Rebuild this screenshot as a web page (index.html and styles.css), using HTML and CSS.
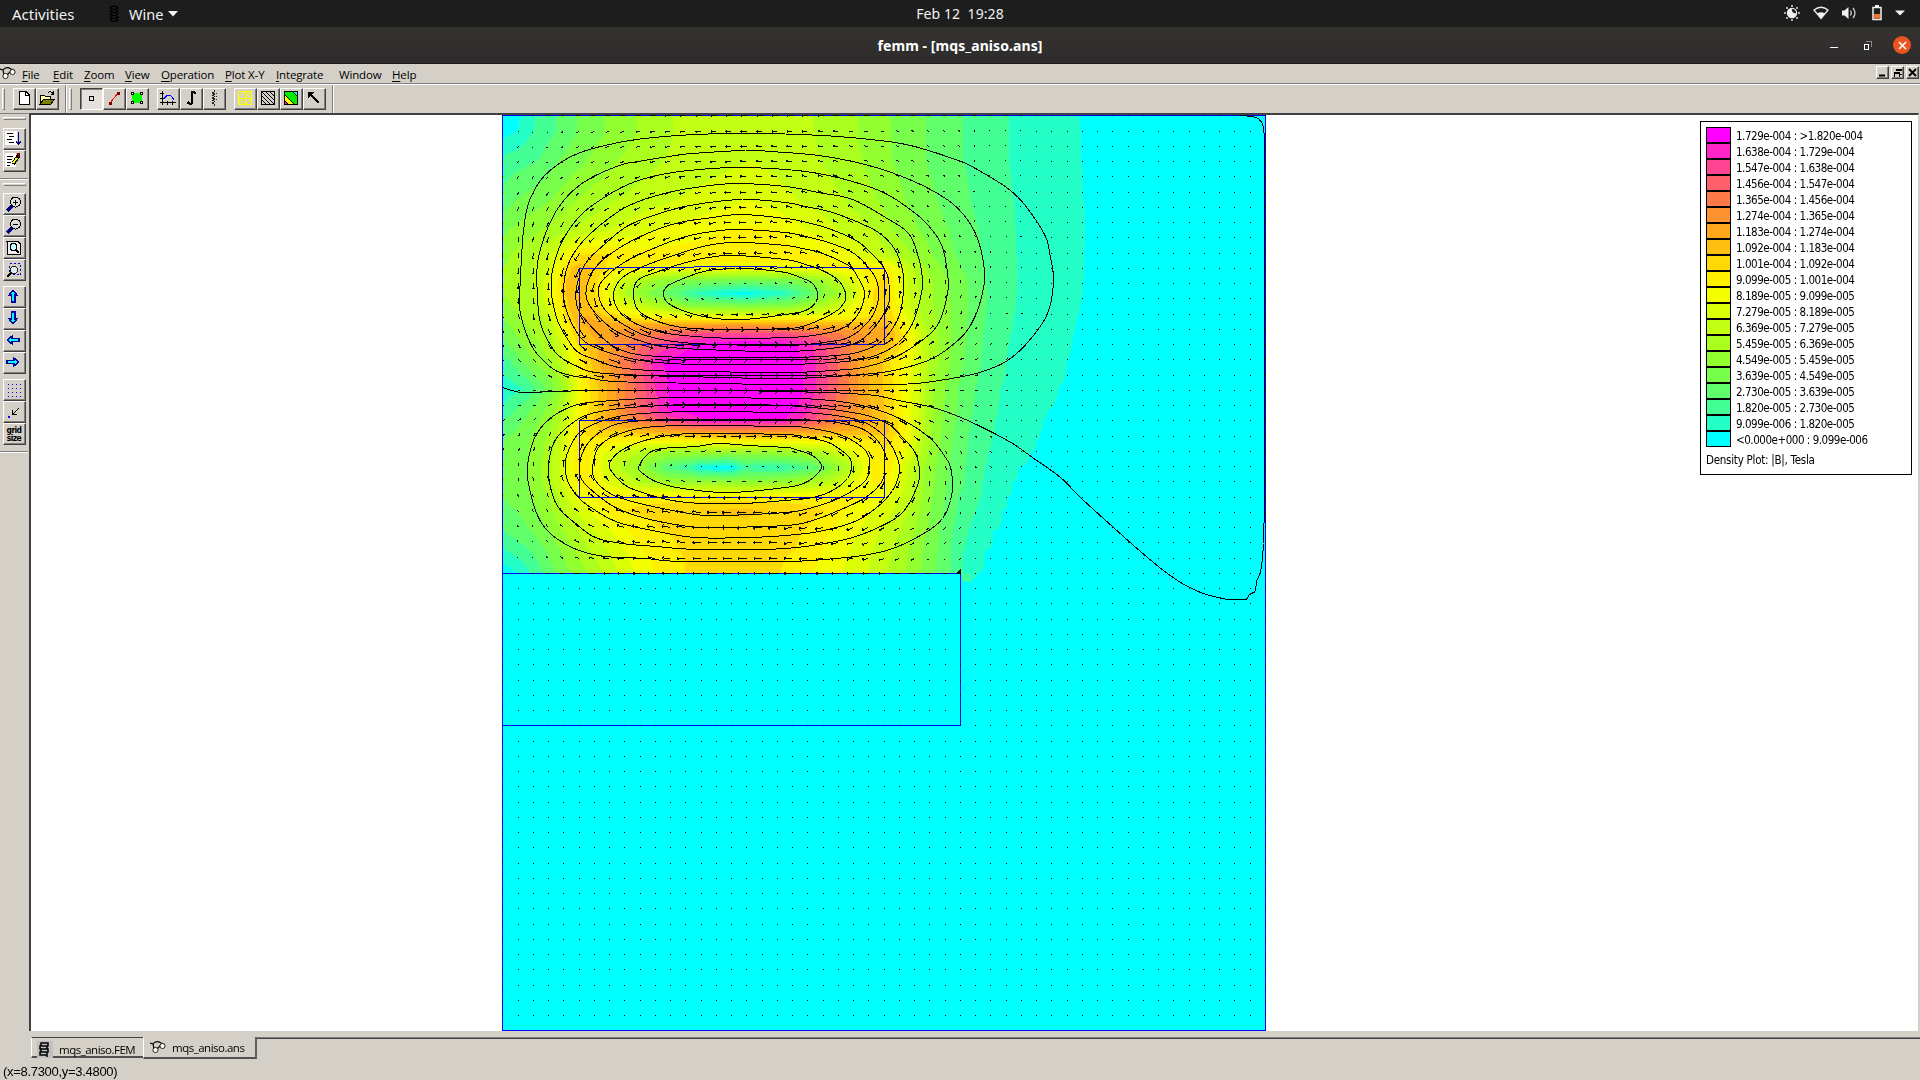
FILE: index.html
```html
<!DOCTYPE html>
<html lang="en">
<head>
<meta charset="utf-8">
<title>femm - [mqs_aniso.ans]</title>
<link rel="stylesheet" href="styles.css">
</head>
<body>
<header class="topbar">
  <div class="top-left">
    <span class="activities">Activities</span>
    <svg class="coil" width="10" height="18" viewBox="0 0 10 18"><g fill="none" stroke="#000" stroke-width="1.2"><path d="M1 3Q5-1 9 3Q5 6 1 3M1 6Q5 3 9 6Q5 9 1 6M1 9Q5 6 9 9Q5 12 1 9M1 12Q5 9 9 12Q5 15 1 12M1 15Q5 12 9 15Q5 18 1 15"/></g></svg>
    <span class="wine">Wine</span>
    <svg class="caret" width="10" height="6"><path d="M0 0H10L5 5.5Z" fill="#f2f2f2"/></svg>
  </div>
  <div class="clock">Feb 12&nbsp; 19:28</div>
  <div class="tray">
    <svg width="16" height="16" viewBox="0 0 16 16"><g fill="#aaa"><rect x="7" y="0" width="2" height="2"/><rect x="7" y="14" width="2" height="2"/><rect x="0" y="7" width="2" height="2"/><rect x="14" y="7" width="2" height="2"/><rect x="2" y="2" width="2" height="2"/><rect x="12" y="2" width="2" height="2"/><rect x="2" y="12" width="2" height="2"/><rect x="12" y="12" width="2" height="2"/></g><circle cx="8" cy="8" r="4.6" fill="none" stroke="#eee" stroke-width="1.2"/><path d="M8 3.5A4.6 4.6 0 1 0 12.5 8A3.5 3.5 0 0 1 8 3.5Z" fill="#f2f2f2"/></svg>
    <svg width="16" height="14" viewBox="0 0 16 14"><path d="M1 4Q8-1.5 15 4L8 12.5Z" fill="none" stroke="#eee" stroke-width="1.3"/><path d="M4.2 7.6Q8 5 11.8 7.6L8 12.5Z" fill="#f2f2f2"/></svg>
    <svg width="16" height="14" viewBox="0 0 16 14"><path d="M1 4.5H3.5L7.5 1V13L3.5 9.5H1Z" fill="#f2f2f2"/><path d="M9.5 4.5Q11 7 9.5 9.5M12 2Q16 7 12 12" fill="none" stroke="#ccc" stroke-width="1.3"/></svg>
    <svg width="10" height="16" viewBox="0 0 10 16"><path d="M1 2.5H9V14.5H1Z" fill="none" stroke="#f2f2f2" stroke-width="1.5"/><path d="M3 0H7V2H3Z" fill="#f2f2f2"/><path d="M2 9H8V13.5H2Z" fill="#f4702f"/></svg>
    <svg width="10" height="6"><path d="M0 .5H10L5 5.5Z" fill="#f2f2f2"/></svg>
  </div>
</header>
<div class="titlebar">
  <span class="title">femm - [mqs_aniso.ans]</span>
  <div class="wm">
    <i class="wm-min"></i>
    <svg width="9" height="9" shape-rendering="crispEdges"><path d="M3 .5H8.5V6" fill="none" stroke="#888"/><path d="M1 3.5H5.5V8H1Z" fill="none" stroke="#fff"/></svg>
    <span class="wm-close"><svg width="9" height="9"><path d="M1 1L8 8M8 1L1 8" stroke="#fff" stroke-width="1.6"/></svg></span>
  </div>
</div>
<nav class="menubar">
  <svg class="doc-ico" width="16" height="14" viewBox="0 0 16 14"><path d="M0 3L3 4L4 9M3 4Q6 0 11 3L14 4M7 9L11 5" fill="none" stroke="#000" stroke-width="1.2"/><circle cx="5.500" cy="10" r="2.600" fill="#fff" stroke="#222"/><circle cx="12.500" cy="6" r="2.600" fill="#fff" stroke="#222"/></svg>
  <span class="m m1"><u>F</u>ile</span><span class="m m2"><u>E</u>dit</span><span class="m m3"><u>Z</u>oom</span><span class="m m4"><u>V</u>iew</span><span class="m m5"><u>O</u>peration</span><span class="m m6"><u>P</u>lot X-Y</span><span class="m m7"><u>I</u>ntegrate</span><span class="m m8">Window</span><span class="m m9"><u>H</u>elp</span>
  <div class="mdi">
    <b><svg width="9" height="9"><path d="M1 7.500H7" stroke="#000" stroke-width="2"/></svg></b>
    <b><svg width="9" height="9" shape-rendering="crispEdges"><path d="M3 3V1H9V6H7M3 2H9M1 4H6V9H1ZM1 5H6" fill="none" stroke="#000"/></svg></b>
    <b><svg width="9" height="9"><path d="M1 1L8 8M8 1L1 8" stroke="#000" stroke-width="1.900"/></svg></b>
  </div>
</nav>
<div class="toolbar">
  <i class="vgrip"></i>
  <div class="btns g1">
    <b><svg viewBox="0 0 16 16"><path d="M3 1.500H10L13.500 5V14.500H3Z" fill="#fff" stroke="#000"/><path d="M9.500 1.500V5.500H13.500" fill="none" stroke="#000"/></svg></b>
    <b><svg viewBox="0 0 16 16"><path d="M1 14V5H5L6 6H11V9" fill="#ff9" stroke="#000"/><path d="M1 14L5 9H15.500L12 14Z" fill="#808000" stroke="#000"/><path d="M9 3Q12 0 14 4M14.500 1V4.500H11.500" fill="none" stroke="#000"/></svg></b>
  </div>
  <i class="vsep"></i><i class="vgrip"></i>
  <div class="btns g2">
    <b class="down"><svg viewBox="0 0 16 16"><path d="M6.500 6.500H10.500V10.500H6.500Z" fill="none" stroke="#000"/></svg></b>
    <b><svg viewBox="0 0 16 16"><path d="M4 13L12 3" stroke="#f00"/><path d="M3 12H6V15H3ZM11 2H14V5H11Z" fill="#800000"/></svg></b>
    <b><svg viewBox="0 0 16 16"><path d="M3 3H13V13H3Z" fill="#0f0"/><path d="M2.500 2.500h2v2h-2zM11.500 2.500h2v2h-2zM2.500 11.500h2v2h-2zM11.500 11.500h2v2h-2z" fill="#fff" stroke="#000"/></svg></b>
  </div>
  <div class="btns g3">
    <b><svg viewBox="0 0 16 16"><path d="M2.500 1V15M0 12.500H16M0 3.500H4M0 8.500H4M7.500 11V15M12.500 11V15" stroke="#000" fill="none"/><path d="M4 9Q9 1 14 10" fill="none" stroke="#00f"/></svg></b>
    <b><svg viewBox="0 0 16 16"><path d="M12.500 4Q12 1 9 2V13Q7 15 4.500 12" fill="none" stroke="#000" stroke-width="2.200"/></svg></b>
    <b><svg viewBox="0 0 16 16"><path d="M8 0V2L6 3L9 4L6 5.500L9 6.500L6 8L9 9L6 10.500L9 11.500L6 13L8 14V16M10 3L11 4M10 6L11 7M10 9L11 10" fill="none" stroke="#000" stroke-width=".8"/></svg></b>
  </div>
  <div class="btns g4">
    <b><svg viewBox="0 0 16 16"><path d="M1.500 1.500H14.500V14.500H1.500ZM1 8.500H15M8.500 1V15M1 8L8 1L15 8L8 15ZM1 15L8 8L15 1" fill="none" stroke="#ff0"/></svg></b>
    <b><svg viewBox="0 0 16 16"><path d="M1.500 1.500H14.500V14.500H1.500ZM1 5L11 15M1 9L7 15M1 1L15 15M5 1L15 11M9 1L15 7M1 13L3 15M13 1L15 3" fill="none" stroke="#000"/></svg></b>
    <b><svg viewBox="0 0 16 16"><path d="M1 1H15V15H1Z" fill="#0e0"/><path d="M1 4L12 15H5L1 11Z" fill="#ff0"/><path d="M1 10L6 15H1Z" fill="#f0f"/><path d="M9 1H15V7Z" fill="#0ff"/><path d="M1.500 1.500H14.500V14.500H1.500ZM1 4L12 15M1 10L6 15M9 1L15 7" fill="none" stroke="#000"/></svg></b>
    <b><svg viewBox="0 0 16 16"><path d="M3 3L13 13" stroke="#000" stroke-width="2"/><path d="M2 8V2H8L6 4L4 6Z"/></svg></b>
  </div>
  <i class="vsep"></i>
</div>
<div class="main">
  <aside class="side">
    <i class="hgrip"></i>
    <div class="col c1">
      <b><svg viewBox="0 0 16 16"><path d="M0 1H12V15H0Z" fill="#fff"/><path d="M2 3.500H8M4 6.500H9M2 9.500H7M4 12.500H9" stroke="#000"/><path d="M13.500 2V14M11 11L13.500 14L16 11" stroke="#000080" fill="none" stroke-width="1.300"/></svg></b>
      <b><svg viewBox="0 0 16 16"><path d="M0 1H11V15H0Z" fill="#fff"/><path d="M2 4.500H8M2 7.500H7M2 10.500H6M2 13H5" stroke="#000"/><path d="M14 3L8 12" stroke="#000" stroke-width="4"/><path d="M12 6L8 11" stroke="#ff0" stroke-width="2"/><path d="M12 1H15V5H13Z" fill="#800000"/></svg></b>
    </div>
    <i class="hsep"></i><i class="hgrip"></i>
    <div class="col c2">
      <b><svg viewBox="0 0 16 16"><path d="M1 15L6 10" stroke="#000080" stroke-width="3"/><circle cx="9.500" cy="6" r="5" fill="#ddd" stroke="#000"/><path d="M7 6.500H12M9.500 4V9" stroke="#000"/></svg></b>
      <b><svg viewBox="0 0 16 16"><path d="M1 15L6 10" stroke="#000080" stroke-width="3"/><circle cx="9.500" cy="6" r="5" fill="#ddd" stroke="#000"/><path d="M7 6.500H12" stroke="#000"/></svg></b>
      <b><svg viewBox="0 0 16 16"><path d="M1 1.500H12L14.500 4V14.500H1.500Z" fill="#eee" stroke="#000"/><circle cx="7.500" cy="7" r="3.500" fill="#cff" stroke="#000"/><path d="M10 10L13 13" stroke="#000" stroke-width="2"/></svg></b>
      <b><svg viewBox="0 0 16 16"><path d="M3.500 1.500H14.500V12.500H3.500Z" fill="none" stroke="#00c" stroke-dasharray="2 2"/><path d="M1 15L5 11" stroke="#000" stroke-width="2.500"/><circle cx="8" cy="8" r="3.800" fill="#dee" stroke="#222"/></svg></b>
    </div>
    <div class="col c3">
      <b><svg viewBox="0 0 16 16"><path d="M8 2L12 7H10V14H6.500V7H4Z" fill="#0ff" stroke="#0000a0" stroke-width="1.300"/></svg></b>
      <b><svg viewBox="0 0 16 16"><path d="M8 14L12 9H10V2H6.500V9H4Z" fill="#0ff" stroke="#0000a0" stroke-width="1.300"/></svg></b>
      <b><svg viewBox="0 0 16 16"><path d="M2 8L7 4V6.300H14V9.800H7V12Z" fill="#0ff" stroke="#0000a0" stroke-width="1.300"/></svg></b>
      <b><svg viewBox="0 0 16 16"><path d="M14 8L9 4V6.300H2V9.800H9V12Z" fill="#0ff" stroke="#0000a0" stroke-width="1.300"/></svg></b>
    </div>
    <div class="col c4">
      <b><svg viewBox="0 0 16 16"><path d="M2 2.500H15M2 6.500H15M2 10.500H15M2 14.500H15" stroke="#00f" stroke-dasharray="1 3"/></svg></b>
      <b><svg viewBox="0 0 16 16"><path d="M13 4L6 11M6.500 6V10.500H11" fill="none" stroke="#000"/><path d="M2 12H4V14H2Z" fill="#00f"/></svg></b>
      <b class="gs"><span>grid<br>size</span></b>
    </div>
    <i class="hsep last"></i>
  </aside>
  <section class="view">
    <div class="plot">
      <canvas id="density" width="764" height="916"></canvas>
      <svg id="lines" width="764" height="916" viewBox="502 115 764 916" shape-rendering="crispEdges"></svg>
    </div>
    <div class="legend"><div id="scale"></div><p>Density Plot: |B|, Tesla</p></div>
  </section>
</div>
<div class="tabs">
  <div class="tab t1"><svg width="16" height="17" viewBox="0 0 16 17"><path d="M0 0H16V17H0Z" fill="#c0c0c0"/><path d="M4 2H11V5H4ZM3 5H10V8H3ZM4 8H11V11H4ZM3 11H10V14H3ZM4 14H10V16" fill="none" stroke="#000" stroke-width="1.500"/></svg><span>mqs_aniso.FEM</span></div>
  <div class="tab t2"><svg width="16" height="14" viewBox="0 0 16 14"><path d="M0 3L3 4L4 9M3 4Q6 0 11 3L14 4M7 9L11 5" fill="none" stroke="#000" stroke-width="1.2"/><circle cx="5.500" cy="10" r="2.600" fill="#fff" stroke="#222"/><circle cx="12.500" cy="6" r="2.600" fill="#fff" stroke="#222"/></svg><span>mqs_aniso.ans</span></div>
  <i class="tabline"></i>
</div>
<footer class="status"><span>(x=8.7300,y=3.4800)</span></footer>
<script src="plot.js"></script>
</body>
</html>
```
FILE: styles.css
```css
*{box-sizing:border-box}
body{margin:0;width:1920px;height:1080px;overflow:hidden;background:#d4d0c8;display:flex;flex-direction:column;font:12px "Open Sans","Noto Sans",sans-serif;color:#000}
svg{display:block}
.topbar{height:27px;flex:none;background:#1d1d1d;color:#f2f2f2;display:grid;grid-template-columns:1fr auto 1fr;align-items:center;font:15px/26px "Noto Sans",sans-serif}
.top-left{display:flex;align-items:center;padding-left:12px}
.activities{width:97px;font-size:15px;letter-spacing:0}
.wine{margin-left:10px;width:39px;font-size:14.500px}
.clock{font-size:14px;letter-spacing:.08px}
.tray{display:flex;align-items:center;justify-content:flex-end;gap:13px;padding-right:15px;margin-top:-1px}
.tray svg:nth-child(2){margin-right:-1px}
.tray svg:nth-child(3){margin-right:2px}
.titlebar{height:37px;flex:none;background:linear-gradient(#353330,#2e2b2c);border-bottom:1px solid #1c1a1a;display:flex;align-items:center;justify-content:center;position:relative;color:#fff}
.title{font:bold 14px "Noto Sans",sans-serif;letter-spacing:.08px}
.wm{position:absolute;right:9px;top:9px;display:flex;align-items:center;height:18px}
.wm-min{width:8px;height:1px;background:#fff;margin:5px 25px 0 0}
.wm-close{width:18px;height:18px;border-radius:50%;background:#e95420;display:grid;place-items:center;margin-left:21px}
.menubar{height:21px;flex:none;display:flex;align-items:center;border-bottom:1px solid #fff;box-shadow:inset 0 -1px #808080;font-size:11.500px}
.doc-ico{width:16px;margin-right:6px;margin-bottom:3px}
.m{line-height:18px;white-space:nowrap;padding-top:2px;letter-spacing:-.15px}
.m u{text-underline-offset:2px}
.m1{width:31px}.m2{width:31px}.m3{width:41px}.m4{width:36px}.m5{width:64px}.m6{width:51px}.m7{width:63px}.m8{width:53px}
.mdi{margin-left:auto;display:flex;gap:2px;padding:0 1px 4px 0}
.mdi b{width:13px;height:13px;border:1px solid;border-color:#fff #404040 #404040 #fff;box-shadow:inset -1px -1px #808080;display:grid;place-items:center}
.toolbar{height:28px;flex:none;display:flex;align-items:center;padding-left:2px}
.vgrip{width:3px;height:22px;border:1px solid;border-color:#fff #808080 #808080 #fff}
.vsep{width:2px;height:28px;border-left:1px solid #808080;border-right:1px solid #fff}
.toolbar .vsep+.vgrip{margin-left:2px}
.btns{display:flex}
.g1{margin:0 6px 0 8px}.g2{margin-left:8px}.g3{margin-left:8px}.g4{margin:0 6px 0 8px}
.btns b,.col b{width:23px;height:22px;border:1px solid;border-color:#fff #404040 #404040 #fff;box-shadow:inset -1px -1px #808080;display:grid;place-items:start;padding:2px 0 0 2px}
.btns b{padding-top:1px}
.btns b.down{border-color:#404040 #fff #fff #404040;box-shadow:inset 1px 1px #808080;background:#e4e1dc}
.btns svg,.col svg{width:16px;height:16px;shape-rendering:crispEdges}
.main{height:918px;flex:none;display:flex}
.side{width:29px;flex:none;border-right:1px solid #d4d0c8;padding:3px 0 0 3px;display:flex;flex-direction:column;border-top:1px solid #808080}
.hgrip{width:23px;height:3px;flex:none;border:1px solid;border-color:#fff #808080 #808080 #fff}
.hsep{height:2px;flex:none;margin:6px 0 3px -3px;border-top:1px solid #808080;border-bottom:1px solid #fff}
.hsep.last{margin-top:6px}
.c1{margin-top:8px}.c2{margin-top:7px}.c3,.c4{margin-top:5px}
.c1 svg,.c3 svg{margin:-1px 0 0 -1px}
.col b.gs{padding:2px 0 0 1px}
.gs span{font:bold 8.500px/8px "DejaVu Sans Condensed","DejaVu Sans",sans-serif;letter-spacing:-.6px;width:18px;text-align:center}
.view{flex:1;background:#fff;border:2px solid #404040;border-right:1px solid #d4d0c8;border-bottom:0;margin-right:1px;display:flex;justify-content:space-between;align-items:flex-start}
.plot{margin-left:471px;display:grid}
.plot>*{grid-area:1/1;display:block}
.legend{width:212px;height:354px;margin:6px 6px 0 0;border:1px solid #000;padding:5px 0 0 5px;font:11.500px "DejaVu Sans Condensed","Noto Sans",sans-serif}
.row{height:16px;display:flex;align-items:center;white-space:pre;letter-spacing:-.46px}
.row i{width:25px;height:16px;border:1px solid #000;margin-right:5px}
.row span{line-height:16px;padding-top:2px}
.legend p{margin:6px 0 0;letter-spacing:-.26px}
.tabs{height:28px;flex:none;display:flex;padding-left:31px;align-items:flex-start;padding-top:6px}
.tab{display:flex;align-items:center;font-size:11.500px;white-space:nowrap;letter-spacing:-.5px}
.t1{width:112px;height:21px;border-top:1px solid #404040;border-left:1px solid #fff;border-bottom:2px solid #505050;padding:5px 0 0 5px}
.t1 span{margin-left:6px}
.t2{width:114px;height:22px;border-left:1px solid #fff;border-right:2px solid #606060;border-bottom:2px solid #505050;padding:0 0 0 6px}
.t2 span{margin-left:6px}
.tabline{flex:1;height:2px;border-top:1px solid #808080;background:#404040}
.status{flex:1;font:13px/18px "Liberation Sans",sans-serif;letter-spacing:-.3px;padding:4px 0 0 3px}
```
FILE: plot.js
```js
const X0 = 502, Y0 = 115, STEP = 15.25;
const COLORS = [[0,255,255],[36,255,200],[68,255,148],[96,255,108],[120,255,76],[146,255,48],[170,255,31],[194,255,18],[218,255,6],[243,255,0],[255,240,0],[255,216,8],[255,191,18],[255,168,30],[255,146,48],[255,122,72],[255,96,108],[255,68,146],[255,36,197],[255,0,255]];

// |B| profiles: [y, x, level, x, level, ...], one level per legend band
const FIELD = [
[115,502,0,520,1,535,2,555,3,577,4,603,5,635,6,673,7,745,7.6,813,7,857,6,890,5,925,4,962,3,1008,2,1079,1],
[130,502,.5,517,1,533,2,556,3,577,4,605,5,637,6,673,7,745,7.8,814,7,857,6,891,5,925,4,962,3,1008,2,1080,1],
[160,502,2.3,538,3,558,4,587,5,618,6,662,7,750,8,820,7,862,6,892,5,925,4,963,3,1008,2,1081,1],
[200,502,3.4,515,4,550,5,575,6,615,7,675,8,750,9,798,8,845,7,877,6,905,5,937,4,970,3,1013,2,1083,1],
[230,502,4.7,508,5,541,6,572,7,608,8,652,9,725,10,750,10.2,780,10,805,9,838,8,872,7,892,6,918,5,948,4,978,3,1015,2,1085,1],
[255,502,5.6,510,6,535,7,550,8,560,9,570,10,578,11,590,11.3,610,11,640,10.4,745,10.6,790,10.3,828,10,855,9,872,8,892,7,912,6,932,5,955,4,982,3,1016,2,1083,1],
[267,502,6,533,7,547,8,555,9,562,10,565,11,571,12,580,12.5,592,12,605,11,628,10,700,9.8,745,9.6,800,9.8,860,10.3,884,10.5,890,10,898,9,904,8,913,7,925,6,940,5,960,4,985,3,1016,2,1083,1],
[280,502,6.2,532,7,543,8,550,9,557,10,561,11,566,12,575,12.8,587,12,597,11,605,10,613,9,623,8,638,7,655,6,675,5,745,4.2,785,4.5,805,5,822,6,835,7,845,8,857,9,867,10,878,11,884,11.3,887,11,893,10,900,9,907,8,917,7,932,6,948,5,967,4,985,3,1017,2,1083,1],
[293,502,6,532,7,542,8,548,9,555,10,560,11,564,12,576,12.9,585,12,595,11,602,10,608,9,615,8,623,7,632,6,645,5,662,4,678,3,692,2,718,1,745,.5,765,1,785,1.6,790,2,805,3,815,4,823,5,838,6,845,7,853,8,860,9,867,10,873,11,884,11.8,888,11,893,10,900,9,908,8,918,7,932,6,948,5,967,4,987,3,1016,2,1082,1],
[305,502,5.6,512,6,537,7,545,8,551,9,557,10,562,11,568,12,576,13,590,12,600,11,608,10,620,9,635,8,650,7,670,6,690,5,745,4.5,790,5,812,6,828,7,842,8,852,9,862,10,873,11,884,11.9,890,11,896,10,902,9,909,8,919,7,933,6,950,5,967,4,986,3,1015,2,1080,1],
[316,502,5.2,520,6,542,7,550,8,555,9,560,10,565,11,572,12,579,13,590,13,605,12,620,11,640,10,680,9.5,745,9,790,9,820,9.5,850,10,868,11,880,12,884,12.1,893,11,900,10,906,9,913,8,921,7,935,6,950,5,967,4,985,3,1013,2,1077,1],
[325,502,4.6,510,5,527,6,547,7,553,8,558,9,563,10,570,11,576,12,583,13,600,13.6,640,13.6,690,13.9,745,14.2,790,13.6,850,13,884,12.9,890,12,898,11,905,10,910,9,916,8,924,7,936,6,950,5,966,4,984,3,1012,2,1075,1],
[333,502,4.3,515,5,533,6,551,7,556,8,561,9,567,10,572,11,580,12,590,13,610,14,640,15,665,16,700,17,745,17.3,785,17,812,16,840,15,862,14,884,13.3,895,12,901,11,908,10,914,9,920,8,927,7,937,6,950,5,966,4,983,3,1010,2,1073,1],
[344,502,3.7,508,4,522,5,540,6,553,7,560,8,566,9,571,10,577,11,585,12,597,13,612,14,628,15,642,16,658,17,676,18,692,19,745,20,796,19,812,18,825,17,840,16,852,15,868,14,884,13,893,12,902,11,909,10,915,9,921,8,928,7,938,6,950,5,965,4,982,3,1008,2,1071,1],
[360,502,2.7,510,3,520,4,532,5,548,6,557,7,565,8,570,9,577,10,583,11,590,12,598,13,607,14,618,15,630,16,642,17,650,18,660,19,700,20,745,20.5,780,20,801,19,815,18,828,17,838,16,848,15,858,14,868,13,883,12,890,11,902,10,912,9,920,8,928,7,938,6,950,5,963,4,980,3,1006,2,1067,1],
[388,502,1.3,525,2,535,3,545,4,555,5,562,6,568,7,572,8,577,9,581,10,590,11,598,12,607,13,616,14,625,15,635,16,645,17,655,18,668,19,700,20,745,20.5,785,20,803,19,815,18,827,17,837,16,848,15,857,14,868,13,882,12,893,11,900,10,910,9,918,8,925,7,933,6,945,5,957,4,975,3,1000,2,1058,1],
[410,502,2.2,515,3,530,4,545,5,555,6,562,7,568,8,574,9,580,10,588,11,597,12,606,13,616,14,625,15,637,16,648,17,658,18,669,19,745,20.3,796,19,810,18,820,17,832,16,845,15,858,14,870,13,884,12,893,11,902,10,910,9,918,8,924,7,932,6,943,5,957,4,972,3,997,2,1047,1],
[420,502,3,523,4,540,5,552,6,560,7,566,8,572,9,577,10,583,11,592,12,603,13,618,14,635,15,650,16,665,17,682,18,705,19,745,19.3,785,19,798,18,812,17,826,16,840,15,855,14,873,13,884,12.5,897,11,905,10,911,9,918,8,924,7,932,6,942,5,955,4,970,3,995,2,1043,1],
[431,502,3.6,515,4,535,5,548,6,557,7,563,8,569,9,574,10,582,11,600,11.8,620,12,655,13,690,14,745,14.6,790,14,840,13,884,12.5,898,11,905,10,911,9,918,8,924,7,931,6,941,5,953,4,969,3,993,2,1040,1],
[440,502,4,530,5,545,6,555,7,561,8,567,9,573,10,584,10.8,610,10.5,650,10,700,10.3,745,10.4,800,10.2,850,10.3,875,11,884,11.3,890,11,902,10,910,9,917,8,923,7,930,6,940,5,952,4,968,3,991,2,1036,1],
[452,502,4.2,528,5,543,6,553,7,560,8,567,9,574,10,580,10.6,592,10,603,9,618,8,640,7,665,6,745,5.6,800,6,822,7,840,8,855,9,867,10,884,10.9,898,10,906,9,913,8,920,7,928,6,938,5,951,4,967,3,988,2,1030,1],
[467,502,4.3,527,5,541,6,551,7,559,8,566,9,573,10,580,10.5,590,10,600,9,610,8,620,7,633,6,645,5,658,4,668,3,690,2,700,.8,730,.4,737,1.3,745,2.2,765,1.7,785,2,810,3,822,4,832,5,842,6,850,7,857,8,863,9,870,10,884,10.5,892,10,900,9,907,8,915,7,924,6,935,5,948,4,965,3,985,2,1018,1],
[482,502,4.2,528,5,542,6,552,7,561,8,568,9,575,10,582,10.3,592,10,605,9,620,8,640,7,670,6,745,5.6,790,6,820,7,840,8,853,9,872,10,880,10.2,888,10,897,9,905,8,914,7,923,6,934,5,947,4,963,3,982,2,1012,1],
[497,502,4,532,5,548,6,558,7,567,8,576,9,588,10,610,10.5,650,10.6,745,10.5,820,10.3,868,10.1,886,9,900,8,912,7,922,6,932,5,944,4,958,3,980,2,1007,1],
[510,502,3.7,517,4,538,5,552,6,563,7,575,8,589,9,603,10,625,11,670,11.6,700,12,745,12.2,765,12,800,11.6,825,11,845,10,872,9,893,8,908,7,919,6,930,5,942,4,956,3,975,2,1002,1],
[530,502,3,530,4,548,5,562,6,577,7,592,8,610,9,627,10,660,11,745,11.7,805,11,830,10,858,9,880,8,900,7,914,6,926,5,939,4,952,3,968,2,993,1],
[550,502,1.9,506,2,530,3,545,4,560,5,575,6,590,7,607,8,625,9,642,10,678,11,745,11.4,795,11,822,10,848,9,872,8,892,7,908,6,922,5,937,4,950,3,963,2,985,1],
[573,502,.3,517,1,530,2,543,3,555,4,570,5,587,6,602,7,618,8,635,9,655,10,685,11,735,11.2,780,11,812,10,842,9,868,8,887,7,905,6,920,5,935,4,950,3,962,2,977,1]
];

function along(r, x) {
  for (let i = 1; i < r.length; i += 2) {
    const nx = i + 2 < r.length ? r[i + 2] : 1266, nv = i + 2 < r.length ? r[i + 3] : 0;
    if (x <= nx) return r[i + 1] + (nv - r[i + 1]) * Math.max(0, x - r[i]) / (nx - r[i]);
  }
  return 0;
}
function level(x, y) {
  if (y > 573) return 0;
  for (let k = 1; k < FIELD.length; k++) {
    const a = FIELD[k - 1], b = FIELD[k];
    if (y <= b[0]) return along(a, x) + (along(b, x) - along(a, x)) * (y - a[0]) / (b[0] - a[0]);
  }
  return 0;
}

const cv = document.getElementById('density'), g = cv.getContext('2d');
const img = g.createImageData(764, 916);
for (let y = 0; y < 916; y++) for (let x = 0; x < 764; x++) {
  let v = level(x + X0, y + Y0);
  if (y + Y0 > 573) {
    const dx = x + X0 - 967, dy = y + Y0 - 572;
    if (dx > -6 && dx * dx / 100 + dy * dy / 85 < 1) v = dx < 3 ? 2 : 1;
  }
  const c = COLORS[Math.min(19, Math.floor(v))], o = (y * 764 + x) * 4;
  img.data[o] = c[0]; img.data[o + 1] = c[1]; img.data[o + 2] = c[2]; img.data[o + 3] = 255;
}
g.putImageData(img, 0, 0);

// Flux lines around the upper coil
const UPPER = [
[520,277,519,305,523,325,531,345,540,357,555,370,575,376,587,377,615,381,708,383,785,384,865,384,915,383,962,376,985,370,1007,360,1028,341,1047,313,1053,280,1049,252,1045,236,1030,212,1010,190,975,168,955,159,910,145,870,139,830,135.5,785,133.5,745,133,695,134,640,138.5,600,146,575,154,556,165,540,180,528,203,523,230,521,257],
[745,150,692,153,675,155,638,161,622,164,595,175,575,188,558,207,545,233,537,263,537,297,540,323,548,341,558,355,577,366,595,372,645,375,682,376,785,378,848,375,880,372,902,368,932,358,955,342,968,328,978,307,984,280,982,257,975,233,962,213,945,198,918,183,885,170,852,161,818,155,785,152],
[745,167,712,168,672,172,638,180,612,192,582,213,562,240,552,270,551,293,557,320,568,340,578,352,595,359,618,367,652,370,695,371,785,372,832,370,862,367,892,358,920,341,938,323,947,293,947,273,942,247,932,230,915,213,885,193,852,181,818,173,785,169],
[735,183,695,187,668,192,638,201,615,213,585,238,568,263,563,290,567,313,580,337,595,347,618,355,648,361,695,364,785,364,833,362,860,359,880,353,898,342,912,323,920,297,922,280,918,257,908,233,885,217,852,199,818,192,785,186],
[742,199,695,204,662,212,628,225,605,243,585,263,576,287,577,307,588,323,605,340,622,350,645,355,695,357,785,357,835,355,860,351,882,340,898,317,903,290,902,270,895,250,882,235,865,225,832,212,805,206,785,202],
[742,214,712,217,675,223,642,235,615,250,595,267,586,287,588,303,602,320,618,332,645,342,670,347,728,350,785,351,830,348,858,341,877,323,888,303,889,290,885,270,868,250,852,238,825,227,802,221,785,218],
[740,229,712,231,682,237,648,250,622,263,602,280,598,293,605,310,628,327,652,337,695,343,785,345,830,341,850,336,868,321,877,303,877,283,868,267,852,252,828,242,805,236,785,232],
[742,242,712,244,682,252,645,265,622,277,613,293,618,310,635,323,662,332,695,336,738,338,785,337,812,335,842,328,858,313,864,293,858,278,848,265,822,253,802,248,785,245],
[735,255,708,257,682,263,655,272,637,280,633,295,638,310,655,320,682,327,728,329,785,328,805,325,832,313,843,303,845,293,838,280,822,270,805,264,785,259],
[735,268,708,270,688,276,668,285,663,293,667,302,682,310,708,317,742,319,785,314,805,310,815,302,817,293,812,283,800,277,785,272,760,269]
];
// Flux lines around the lower coil
const LOWER = [
[527,465,528,483,535,510,545,528,562,542,582,551,605,556,645,558,682,561,785,561,835,558,868,554,895,547,925,532,942,518,950,500,952,483,950,467,945,457,932,440,912,425,885,412,852,403,818,399,785,398,695,397,645,398,612,400,582,403,562,410,545,422,533,440],
[548,465,550,487,558,507,575,523,595,537,622,543,655,546,695,549,745,549,785,548,818,544,852,537,882,525,902,512,915,490,919,473,915,453,902,437,885,422,852,412,785,405,695,404,645,406,612,409,585,415,565,428,553,443],
[565,463,567,480,578,497,595,510,618,522,652,530,695,537,745,537,785,535,818,531,852,522,875,508,892,490,899,470,895,453,885,437,870,425,852,418,818,413,785,412,695,411,642,413,618,416,595,423,578,433,568,450],
[579,467,582,480,595,493,615,507,642,517,675,524,708,527,785,525,812,520,838,510,865,497,882,480,884,463,882,447,865,430,842,423,818,420,785,419,695,419,645,420,615,424,595,435,583,450],
[592,467,595,480,608,492,628,500,662,508,695,514,722,515,785,512,812,507,838,498,862,483,869,470,867,453,852,440,832,432,805,427,785,426,695,425,645,427,615,435,598,447],
[609,463,612,472,625,485,645,493,672,500,702,503,742,503,785,500,812,497,832,490,847,478,851,465,847,455,828,442,805,437,785,434,695,433,662,436,635,443,618,452],
[638,467,645,475,658,482,682,488,728,492,785,487,805,482,817,473,821,465,812,455,795,449,785,447,748,445,718,443,695,446,662,448,648,453]
];
const DIVIDE = [502,387,520,392,540,392,550,391,652,389.5,785,391,865,394,898,400,932,407,965,419,1007,440,1032,457,1060,477,1080,497,1113,527,1147,557,1177,580,1203,593,1227,599,1246,599,1249,594,1255,591,1256,581,1260,572,1262,558,1263,543,1264,503,1264,137,1263,127,1262,123,1258,118,1252,116,1240,115];

const pts = a => { const o = []; for (let i = 0; i < a.length; i += 2) o.push([a[i], a[i + 1]]); return o; };
function smooth(p, closed) {
  const n = p.length, at = i => closed ? p[(i + n) % n] : p[Math.max(0, Math.min(n - 1, i))], out = [];
  for (let i = 0; i < (closed ? n : n - 1); i++) {
    const a = at(i - 1), b = at(i), c = at(i + 1), d = at(i + 2);
    for (let s = 0; s < 6; s++) {
      const t = s / 6;
      out.push([0, 1].map(k => .5 * (2 * b[k] + (c[k] - a[k]) * t + (2 * a[k] - 5 * b[k] + 4 * c[k] - d[k]) * t * t + (3 * b[k] - a[k] - 3 * c[k] + d[k]) * t * t * t)));
    }
  }
  out.push(at(closed ? 0 : n - 1));
  return out;
}
const curves = [
  ...UPPER.map(a => smooth(pts(a), true)),
  ...LOWER.map(a => smooth(pts(a).reverse(), true)),
  smooth(pts(DIVIDE).slice(0, 19), false).concat(pts(DIVIDE).slice(19))
];
const lineD = curves.map(c => 'M' + c.map(q => (q[0] + .5).toFixed(1) + ' ' + (q[1] + .5).toFixed(1)).join('L')).join('');

// Field direction taken from the neighbouring flux lines
const segs = [];
curves.forEach(c => { for (let i = 1; i < c.length; i++) {
  const dx = c[i][0] - c[i - 1][0], dy = c[i][1] - c[i - 1][1], l = Math.hypot(dx, dy);
  if (l) segs.push([(c[i][0] + c[i - 1][0]) / 2, (c[i][1] + c[i - 1][1]) / 2, dx, dy]);
} });
function direction(x, y) {
  let u = 0, v = 0;
  for (const s of segs) {
    const w = 1 / Math.pow((s[0] - x) ** 2 + (s[1] - y) ** 2 + 12, 1.7);
    u += s[2] * w; v += s[3] * w;
  }
  return Math.atan2(v, u);
}
let arrows = '', dots = '';
for (let j = 0; j <= 60; j++) for (let i = 0; i <= 50; i++) {
  const x = Math.floor(X0 + .8 + i * STEP), y = j ? Math.floor(Y0 + .8 + j * STEP) : Y0;
  const len = level(x, Math.min(y, j === 30 ? 573 : y)) * .78;
  if (len < 1.4 || j > 30) { if (j < 60) dots += `M${x} ${y}h1v1h-1z`; continue; }
  const t = j === 0 || j === 30 ? Math.PI : direction(x, y);
  const ex = x + .5 + Math.cos(t) * len, ey = y + .5 + Math.sin(t) * len;
  arrows += `M${x + .5} ${y + .5}L${ex.toFixed(1)} ${ey.toFixed(1)}`;
  if (len > 5) {
    const h = len * .26;
    for (const s of [2.3, -2.3]) arrows += `M${ex.toFixed(1)} ${ey.toFixed(1)}l${(Math.cos(t + s) * h).toFixed(1)} ${(Math.sin(t + s) * h).toFixed(1)}`;
  }
}
document.getElementById('lines').innerHTML =
  `<path d="M502.500 115.500H1265.500V1030.500H502.500ZM579.500 268.500L650 267.500L740 266.500L884.500 268.500V344.500H579.500ZM579.500 420.500H884.500V497.500H579.500ZM502.500 573.500H960.500V725.500H502.500" fill="none" stroke="#00f"/>` +
  `<path d="${lineD}" fill="none" stroke="#000"/><path d="${arrows}" fill="none" stroke="#000"/><path d="${dots}M956 573L961 569V575Z"/>`;

const LABELS = ['1.729e-004 : >1.820e-004','1.638e-004 : 1.729e-004','1.547e-004 : 1.638e-004','1.456e-004 : 1.547e-004','1.365e-004 : 1.456e-004','1.274e-004 : 1.365e-004','1.183e-004 : 1.274e-004','1.092e-004 : 1.183e-004','1.001e-004 : 1.092e-004','9.099e-005 : 1.001e-004','8.189e-005 : 9.099e-005','7.279e-005 : 8.189e-005','6.369e-005 : 7.279e-005','5.459e-005 : 6.369e-005','4.549e-005 : 5.459e-005','3.639e-005 : 4.549e-005','2.730e-005 : 3.639e-005','1.820e-005 : 2.730e-005','9.099e-006 : 1.820e-005','<0.000e+000 : 9.099e-006'];
document.getElementById('scale').innerHTML = LABELS.map((t, i) =>
  `<div class="row"><i style="background:rgb(${COLORS[19 - i]})"></i><span>${t.replace('<', '&lt;')}</span></div>`).join('');
```
